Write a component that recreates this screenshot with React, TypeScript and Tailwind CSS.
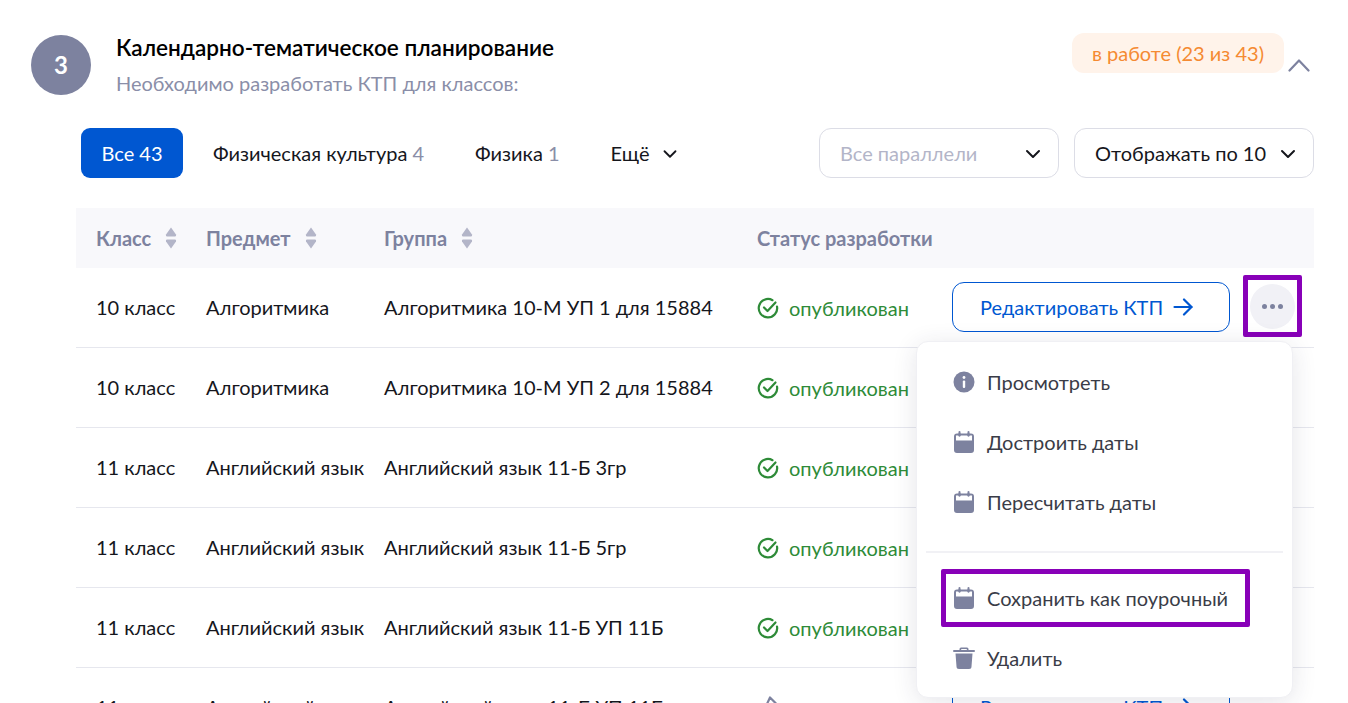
import React from "react";
import { ChevronDown } from "lucide-react";

const rows = [
  ["10 класс", "Алгоритмика", "Алгоритмика 10-М УП 1 для 15884"],
  ["10 класс", "Алгоритмика", "Алгоритмика 10-М УП 2 для 15884"],
  ["11 класс", "Английский язык", "Английский язык 11-Б 3гр"],
  ["11 класс", "Английский язык", "Английский язык 11-Б 5гр"],
  ["11 класс", "Английский язык", "Английский язык 11-Б УП 11Б"],
  ["11 класс", "Английский язык", "Английский язык 11-Б УП 11Б"],
];

function Sort() {
  return (
    <svg width="12" height="22" viewBox="0 0 12 22" className="ml-[14px] shrink-0" fill="#b3b5c8">
      <path d="M6 0.5 L11 7.5 Q11.6 9.5 10 9.5 H2 Q0.4 9.5 1 7.5 Z" />
      <path d="M2 12.5 H10 Q11.6 12.5 11 14.5 L6 21.5 L1 14.5 Q0.4 12.5 2 12.5 Z" />
    </svg>
  );
}

function Check() {
  return (
    <svg width="22" height="22" viewBox="0 0 22 22" fill="none" stroke="#2e8b38" strokeWidth="2.2" strokeLinecap="round" strokeLinejoin="round" className="mt-[2px]">
      <path d="M20 9.5 A9.2 9.2 0 1 1 15.5 3.2" />
      <path d="M7 10.5 L10.5 14 L18.5 5.5" />
    </svg>
  );
}

function Draft() {
  return (
    <svg width="22" height="22" viewBox="0 0 22 22" fill="none" stroke="#7d829f" strokeWidth="2.2" strokeLinecap="round" strokeLinejoin="round">
      <path d="M11 1.5 L17 7.5 L7.5 20 H4 V16.5 Z" transform="translate(2 0)" />
    </svg>
  );
}

function Arrow() {
  return (
    <svg width="20" height="18" viewBox="0 0 20 18" fill="none" stroke="#0057d1" strokeWidth="2.2" strokeLinecap="round" strokeLinejoin="round" className="ml-[10px]">
      <path d="M1.5 9 H18.5" />
      <path d="M11 1.5 L18.5 9 L11 16.5" />
    </svg>
  );
}

function Calendar() {
  return (
    <svg width="20" height="22" viewBox="0 0 20 22" fill="#7d829f">
      <rect x="4.5" y="0" width="2" height="5.5" rx="1" />
      <rect x="13.5" y="0" width="2" height="5.5" rx="1" />
      <path
        fillRule="evenodd"
        d="M3 2.5 H17 A3 3 0 0 1 20 5.5 V19 A3 3 0 0 1 17 22 H3 A3 3 0 0 1 0 19 V5.5 A3 3 0 0 1 3 2.5 Z M2 4.5 V9.5 H18 V4.5 Z"
      />
      <rect x="4.5" y="2" width="2" height="3.5" rx="1" />
      <rect x="13.5" y="2" width="2" height="3.5" rx="1" />
    </svg>
  );
}

function Info() {
  return (
    <svg width="22" height="22" viewBox="0 0 22 22">
      <circle cx="11" cy="11" r="10.5" fill="#7d829f" />
      <circle cx="11" cy="6.5" r="1.4" fill="#fff" />
      <rect x="9.8" y="9.5" width="2.4" height="7.5" rx="1" fill="#fff" />
    </svg>
  );
}

function Trash() {
  return (
    <svg width="22" height="22" viewBox="0 0 22 22" fill="#7d829f">
      <path d="M8 0.5 H14 A1.5 1.5 0 0 1 15.5 2 V3 H21 A0.9 0.9 0 0 1 21 5 H1 A0.9 0.9 0 0 1 1 3 H6.5 V2 A1.5 1.5 0 0 1 8 0.5 Z M8.2 2 V3 H13.8 V2 Z" fillRule="evenodd" />
      <path d="M2.5 6.5 H19.5 L18.5 19.5 A2.5 2.5 0 0 1 16 22 H6 A2.5 2.5 0 0 1 3.5 19.5 Z" />
    </svg>
  );
}

function MenuItem({ icon, label, className }: { icon: React.ReactNode; label: string; className: string }) {
  return (
    <div className={`flex items-center ${className}`}>
      <span className="flex w-[22px] justify-center">{icon}</span>
      <span className="ml-[12px] text-[20px] leading-[24px] text-[#3a3c47]">{label}</span>
    </div>
  );
}

export default function App() {
  return (
    <div className="relative h-[703px] w-[1348px] overflow-hidden bg-white font-['Lato','Noto_Sans',sans-serif] text-[20px] text-[#15161c]">
      <div className="flex items-start pl-[31px] pr-[38px] pt-[33px]">
        <div className="mt-[2px] flex h-[60px] w-[60px] shrink-0 items-center justify-center rounded-full bg-[#7d829f] text-[24px] font-bold text-white">3</div>
        <div className="ml-[25px] flex-1">
          <div className="text-[22.6px] font-semibold leading-[30px] text-black">Календарно-тематическое планирование</div>
          <div className="mt-[8px] text-[20px] leading-[24px] text-[#8a8ea8]">Необходимо разработать КТП для классов:</div>
        </div>
        <div className="flex h-[40px] items-center rounded-[12px] bg-[#fff3ea] px-[20px] text-[#f58a32]">в работе (23 из 43)</div>
        <svg width="22" height="14" viewBox="0 0 22 14" fill="none" stroke="#7d829f" strokeWidth="2.2" strokeLinecap="round" strokeLinejoin="round" className="ml-[4px] mt-[25px]">
          <path d="M1.5 12.5 L11 2.5 L20.5 12.5" />
        </svg>
      </div>

      <div className="ml-[81px] mr-[34px] mt-[33px] flex h-[50px] items-center">
        <div className="flex h-[50px] w-[102px] items-center justify-center rounded-[9px] bg-[#0057d1] text-white">Все 43</div>
        <div className="ml-[30px]">Физическая культура <span className="text-[#8a8ea8]">4</span></div>
        <div className="ml-[51px]">Физика <span className="text-[#8a8ea8]">1</span></div>
        <div className="ml-[51px] flex items-center">Ещё<ChevronDown size={22} strokeWidth={2} className="ml-[9px] mt-px" /></div>
        <div className="ml-auto flex h-[50px] w-[240px] items-center justify-between rounded-[12px] border border-[#dcdde6] pl-[20px] pr-[13px] text-[#b3b5c8]">
          Все параллели<ChevronDown size={24} strokeWidth={2} className="mt-px text-[#15161c]" />
        </div>
        <div className="ml-[15px] flex h-[50px] w-[240px] items-center justify-between rounded-[12px] border border-[#dcdde6] pl-[20px] pr-[13px]">
          Отображать по 10<ChevronDown size={24} strokeWidth={2} className="mt-px" />
        </div>
      </div>

      <div className="ml-[76px] mr-[34px] mt-[30px]">
        <div className="grid h-[60px] grid-cols-[110px_178px_373px_1fr] items-center bg-[#f8f8fb] pl-[20px] font-bold text-[#7d829f]">
          <div className="flex items-center">Класс<Sort /></div>
          <div className="flex items-center">Предмет<Sort /></div>
          <div className="flex items-center">Группа<Sort /></div>
          <div>Статус разработки</div>
        </div>
        {rows.map((r, i) => (
          <div key={i} className="grid h-[80px] grid-cols-[110px_178px_373px_1fr] items-center border-b border-[#e6e7ee] pb-px pl-[20px]">
            <div>{r[0]}</div>
            <div className="whitespace-nowrap">{r[1]}</div>
            <div className="whitespace-nowrap">{r[2]}</div>
            <div className="flex items-center">
              {i < 5 ? <Check /> : <Draft />}
              <span className="ml-[10px] mt-[2px] w-[163px] text-[#2e8b38]">{i < 5 ? "опубликован" : ""}</span>
              <div className="flex h-[50px] w-[278px] items-center rounded-[12px] border border-[#0057d1] pl-[27px] text-[#0057d1]">
                Редактировать КТП<Arrow />
              </div>
            </div>
          </div>
        ))}
      </div>

      <div className="absolute left-[1243px] top-[275px] flex h-[62px] w-[59px] items-center justify-center rounded-[2px] border-[5px] border-[#8800b8]">
        <div className="flex h-[45px] w-[45px] items-center justify-center gap-[3px] rounded-full bg-[#f1f1f6]">
          <span className="h-[5px] w-[5px] rounded-full bg-[#7d829f]" />
          <span className="h-[5px] w-[5px] rounded-full bg-[#7d829f]" />
          <span className="h-[5px] w-[5px] rounded-full bg-[#7d829f]" />
        </div>
      </div>

      <div className="absolute left-[916px] top-[341px] h-[357px] w-[377px] rounded-[12px] border border-[#f0f0f4] bg-white pl-[36px] shadow-[0_4px_24px_rgba(40,44,70,0.12)]">
        <MenuItem icon={<Info />} label="Просмотреть" className="mt-[28px]" />
        <MenuItem icon={<Calendar />} label="Достроить даты" className="mt-[36px]" />
        <MenuItem icon={<Calendar />} label="Пересчитать даты" className="mt-[36px]" />
        <div className="-ml-[27px] mr-[9px] mt-[37px] h-[2px] bg-[#f1f1f5]" />
        <MenuItem icon={<Calendar />} label="Сохранить как поурочный" className="mt-[33px]" />
        <MenuItem icon={<Trash />} label="Удалить" className="mt-[36px]" />
      </div>

      <div className="absolute left-[941px] top-[569px] h-[58px] w-[309px] rounded-[2px] border-[5px] border-[#8800b8]" />
    </div>
  );
}
